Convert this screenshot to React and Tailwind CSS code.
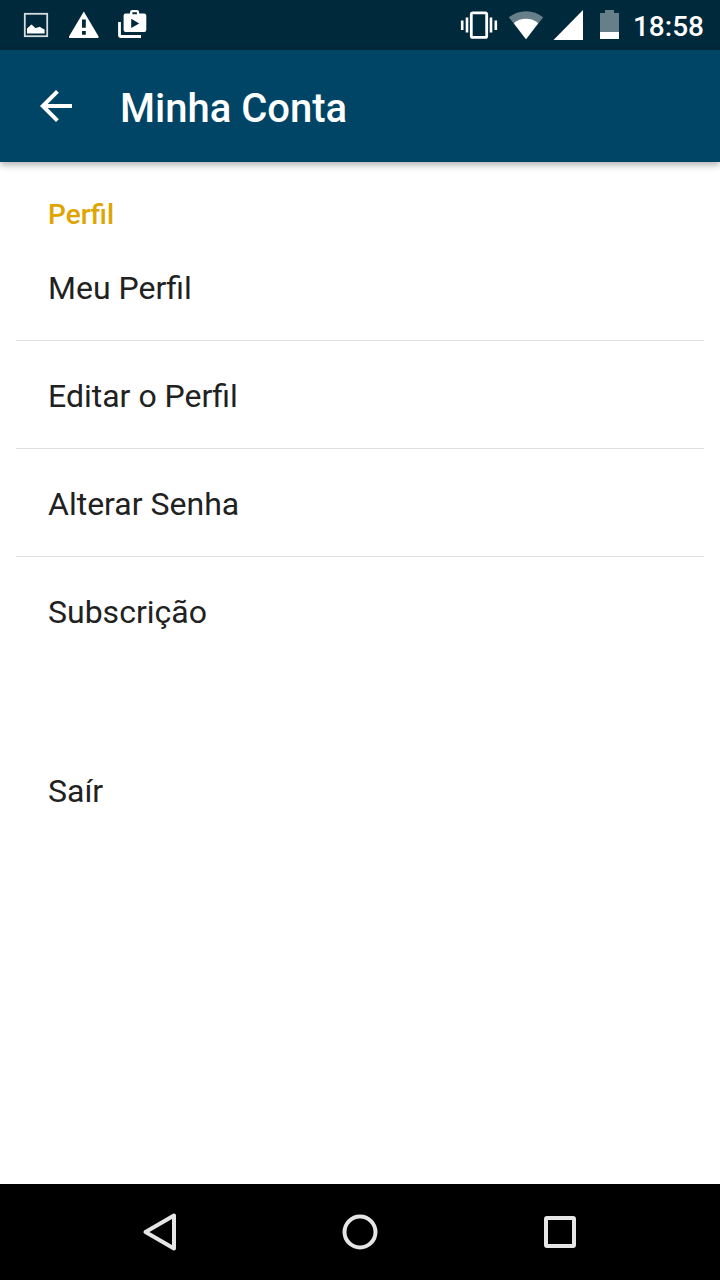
const profileItems = ['Meu Perfil', 'Editar o Perfil', 'Alterar Senha', 'Subscrição'];

function StatusBar() {
  return (
    <div className="flex h-[50px] items-center bg-[#00293b] pl-5 pr-4 text-white">
      <div className="flex gap-4">
        <svg className="h-[50px] w-8" viewBox="20 0 32 50" aria-hidden="true">
          <rect x="24.8" y="13.8" width="22.4" height="22.4" fill="none" stroke="#d5dcdf" strokeWidth="1.8" />
          <path d="M27 33.5V28.6L29 26.8L31.3 24.6L33 25.8L35.3 28L37.6 27.4L39.8 26.8L42 28.2L44.6 29.4V33.5Z" fill="#fff" />
        </svg>
        <svg className="h-[50px] w-8" viewBox="68 0 32 50" aria-hidden="true">
          <path
            fillRule="evenodd"
            fill="#fff"
            d="M83.8 11.4L98.6 36.6Q98.9 38 97.8 38H69.8Q68.6 38 69 36.6ZM82 19.6V27.8H85.8V19.6ZM82 31V34.8H85.8V31Z"
          />
        </svg>
        <svg className="h-[50px] w-8" viewBox="116 0 32 50" aria-hidden="true">
          <path d="M119.5 22V35.5Q119.5 36.5 120.5 36.5H141" fill="none" stroke="#fff" strokeWidth="2.8" />
          <path
            fillRule="evenodd"
            fill="#fff"
            d="M130 13.4V12.4Q130 10 132.4 10H136.8Q139.2 10 139.2 12.4V13.4H144.2Q146.3 13.4 146.3 15.4V30Q146.3 32 144.2 32H125.6Q123.6 32 123.6 30V15.4Q123.6 13.4 125.6 13.4ZM132.4 14.2H136.9V12.2H132.4ZM131.2 18.8V28L139.2 23.4Z"
          />
        </svg>
      </div>
      <div className="ml-auto flex items-center gap-2">
        <svg className="h-[50px] w-10" viewBox="459 0 40 50" aria-hidden="true">
          <rect x="471.3" y="12.8" width="15.4" height="24.6" rx="1.5" fill="none" stroke="#fff" strokeWidth="2.8" />
          <path d="M462.2 20.5V30M467 17.5V32.5M491 17.5V32.5M495.8 20.5V30" stroke="#fff" strokeWidth="2.6" />
        </svg>
        <svg className="h-[50px] w-[38px]" viewBox="507 0 38 50" aria-hidden="true">
          <path d="M526 39.2L508.8 17.2Q516.5 11.2 526 11.2T543.2 17.2Z" fill="#667f89" />
          <path d="M526 39.2L513.8 23.2Q519 18.8 526 18.8T538.2 23.2Z" fill="#fff" />
        </svg>
        <svg className="h-[50px] w-[38px]" viewBox="553 0 38 50" aria-hidden="true">
          <path d="M553.5 40H583V10Z" fill="#fff" />
        </svg>
        <svg className="h-[50px] w-[26px]" viewBox="599 0 26 50" aria-hidden="true">
          <path d="M600 13H605V10H614V13H619V32H600Z" fill="#667f89" />
          <path d="M600 32H619V39H600Z" fill="#fff" />
        </svg>
        <time className="pt-1 text-[28px] leading-9 font-medium">18:58</time>
      </div>
    </div>
  );
}

function AppBar() {
  return (
    <header className="relative flex h-28 items-center bg-[#004565] px-8 text-white shadow-[0_3px_7px_rgba(0,0,0,0.3)]">
      <button type="button" aria-label="Voltar" className="flex size-12 items-center justify-center">
        <svg className="size-12" viewBox="0 0 24 24" fill="currentColor" aria-hidden="true">
          <path d="M20 11H7.83l5.59-5.59L12 4l-8 8 8 8 1.41-1.41L7.83 13H20v-2z" />
        </svg>
      </button>
      <h1 className="ml-10 pt-1.5 text-[40px] leading-12 font-medium">Minha Conta</h1>
    </header>
  );
}

function MenuLink({ children, divided }) {
  return (
    <li className={divided ? 'border-b border-[#dfdfdf]' : 'border-b border-transparent'}>
      <a href="#" className="block px-8 pt-[35px] pb-8 text-[32px] leading-10 text-[#212121]">
        {children}
      </a>
    </li>
  );
}

function NavigationBar() {
  return (
    <nav aria-label="Sistema" className="flex h-24 items-center justify-center gap-[104px] bg-black">
      <button type="button" aria-label="Voltar">
        <svg className="size-24" viewBox="0 0 96 96" fill="none" stroke="#e6e6e6" strokeWidth="4" strokeLinejoin="round" aria-hidden="true">
          <path d="M62 31.5V64.5L33.5 48Z" />
        </svg>
      </button>
      <button type="button" aria-label="Início">
        <svg className="size-24" viewBox="0 0 96 96" fill="none" stroke="#e6e6e6" strokeWidth="4" aria-hidden="true">
          <circle cx="48" cy="48" r="15.5" />
        </svg>
      </button>
      <button type="button" aria-label="Recentes">
        <svg className="size-24" viewBox="0 0 96 96" fill="none" stroke="#e6e6e6" strokeWidth="4" aria-hidden="true">
          <rect x="34" y="34" width="28" height="28" rx="1" />
        </svg>
      </button>
    </nav>
  );
}

export default function App() {
  return (
    <div className="flex min-h-screen flex-col bg-white font-['Roboto',sans-serif]">
      <StatusBar />
      <AppBar />
      <main className="flex-1 px-4 pt-[35px]">
        <h2 className="px-8 text-[28px] leading-9 font-medium text-[#e0a400]">Perfil</h2>
        <ul>
          {profileItems.map((item, i) => (
            <MenuLink key={item} divided={i < profileItems.length - 1}>
              {item}
            </MenuLink>
          ))}
        </ul>
        <ul className="pt-[71px]">
          <MenuLink>Saír</MenuLink>
        </ul>
      </main>
      <NavigationBar />
    </div>
  );
}
